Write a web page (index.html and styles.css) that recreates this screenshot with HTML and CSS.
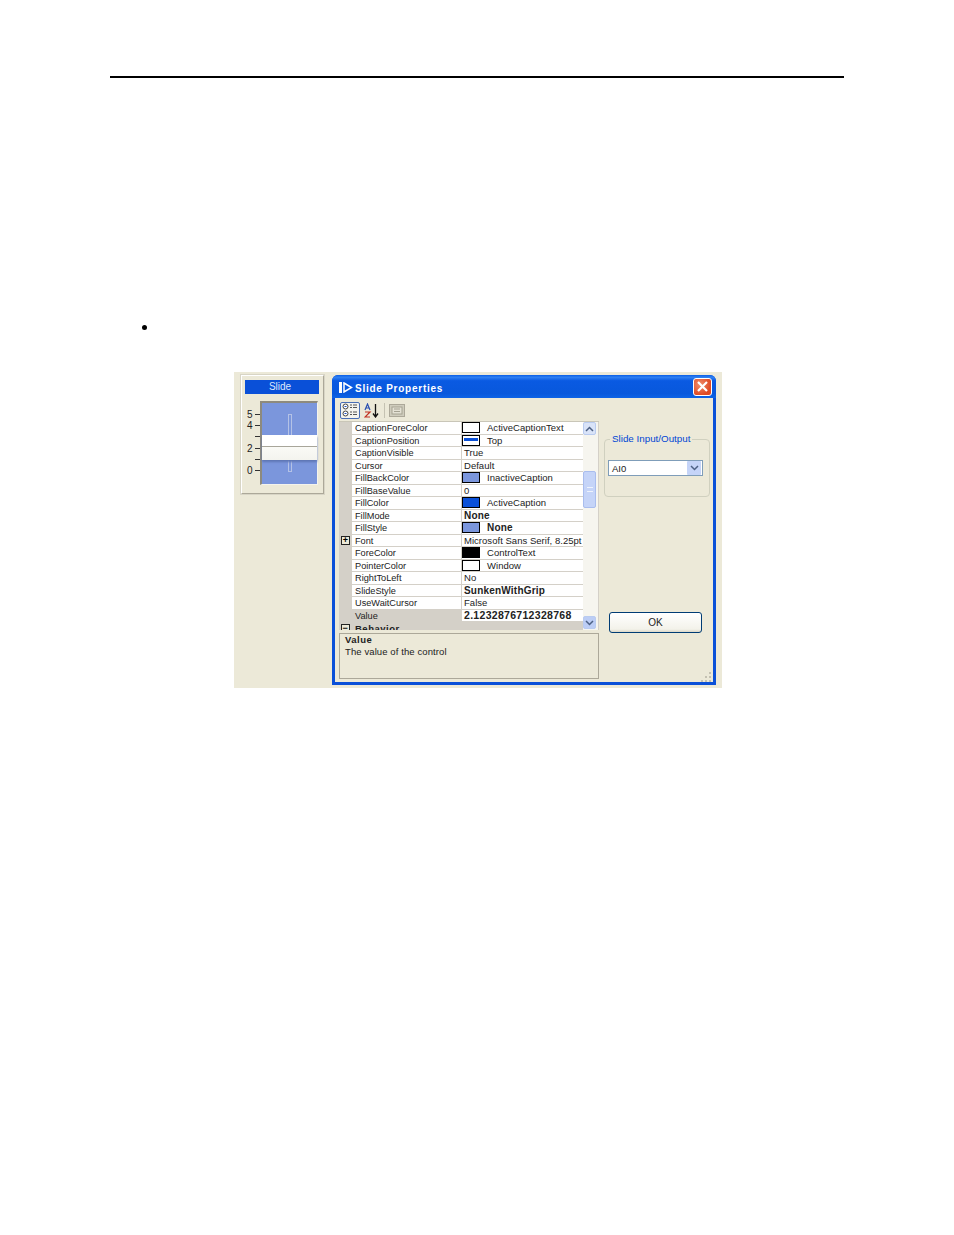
FILE: index.html
```html
<!DOCTYPE html>
<html lang="en">
<head>
    <meta charset="UTF-8">
    <title>Slide Properties</title>
    <link rel="stylesheet" href="styles.css">
</head>
<body>
    <div class="rule"></div>
    <div class="bullet"></div>

    <div class="figure">
        <div class="preview">
            <div class="preview-title">Slide</div>
            <div class="preview-body">
                <div class="scale">
                    <div class="tick"><span>5</span><i></i></div>
                    <div class="tick"><span>4</span><i></i></div>
                    <div class="tick"><span></span><i></i></div>
                    <div class="tick"><span>2</span><i></i></div>
                    <div class="tick"><span></span><i></i></div>
                    <div class="tick"><span>0</span><i></i></div>
                </div>
                <div class="slide">
                    <div class="track"></div>
                    <div class="thumb"></div>
                </div>
            </div>
        </div>

        <div class="dialog">
            <div class="titlebar">
                <svg class="title-icon" width="14" height="11" viewBox="0 0 14 11">
                    <path d="M0 0h3v11H0z" fill="#fff"/>
                    <path d="M5 1 L12.500 5.500 L5 10 Z" fill="none" stroke="#fff" stroke-width="1.500"/>
                </svg>
                <span class="title-text">Slide Properties</span>
                <div class="close">
                    <svg width="19" height="18" viewBox="0 0 19 18">
                        <path d="M5 4 L14 13 M14 4 L5 13" stroke="#fff" stroke-width="2.2"/>
                    </svg>
                </div>
            </div>

            <div class="dialog-body">
                <div class="left-col">
                    <div class="toolbar">
                        <div class="tool tool-on">
                            <svg width="18" height="15" viewBox="0 0 18 15">
                                <circle cx="4.500" cy="3.500" r="2.500" fill="#fff" stroke="#444"/>
                                <circle cx="4.500" cy="10.500" r="2.500" fill="#fff" stroke="#444"/>
                                <path d="M3.500 3.500h2M3.500 10.500h2" stroke="#1c4fc0"/>
                                <path d="M9 2h2M12 2h4M9 4.500h2M12 4.500h4M9 9h2M12 9h4M9 11.500h2M12 11.500h4" stroke="#555"/>
                            </svg>
                        </div>
                        <div class="tool">
                            <svg width="16" height="15" viewBox="0 0 16 15">
                                <path d="M1 7 L3.500 1 L6 7 M2 5h3" fill="none" stroke="#2a4fb0" stroke-width="1.200"/>
                                <path d="M1 9h5 L1 14h5" fill="none" stroke="#c03020" stroke-width="1.200"/>
                                <path d="M11.500 1v12 M9 10.500 L11.500 14 L14 10.500" fill="none" stroke="#111" stroke-width="1.300"/>
                            </svg>
                        </div>
                        <div class="tool-sep"></div>
                        <div class="tool">
                            <svg width="16" height="13" viewBox="0 0 16 13">
                                <rect x="0.500" y="0.500" width="15" height="12" fill="#cfccbd" stroke="#aca899"/>
                                <rect x="3" y="3" width="10" height="7" fill="#e4e1d4" stroke="#a5a292"/>
                                <path d="M5 5h6M5 7.500h6" stroke="#a5a292"/>
                            </svg>
                        </div>
                    </div>

                    <div class="grid">
                        <div class="rows">
                            <div class="row"><div class="gutter"></div><div class="name">CaptionForeColor</div><div class="val"><b class="swatch white"></b>ActiveCaptionText</div></div>
                            <div class="row"><div class="gutter"></div><div class="name">CaptionPosition</div><div class="val"><b class="swatch top"></b>Top</div></div>
                            <div class="row"><div class="gutter"></div><div class="name">CaptionVisible</div><div class="val">True</div></div>
                            <div class="row"><div class="gutter"></div><div class="name">Cursor</div><div class="val">Default</div></div>
                            <div class="row"><div class="gutter"></div><div class="name">FillBackColor</div><div class="val"><b class="swatch soft"></b>InactiveCaption</div></div>
                            <div class="row"><div class="gutter"></div><div class="name">FillBaseValue</div><div class="val">0</div></div>
                            <div class="row"><div class="gutter"></div><div class="name">FillColor</div><div class="val"><b class="swatch blue"></b>ActiveCaption</div></div>
                            <div class="row"><div class="gutter"></div><div class="name">FillMode</div><div class="val bold">None</div></div>
                            <div class="row"><div class="gutter"></div><div class="name">FillStyle</div><div class="val bold"><b class="swatch soft"></b>None</div></div>
                            <div class="row"><div class="gutter"><span class="box">+</span></div><div class="name">Font</div><div class="val">Microsoft Sans Serif, 8.25pt</div></div>
                            <div class="row"><div class="gutter"></div><div class="name">ForeColor</div><div class="val"><b class="swatch black"></b>ControlText</div></div>
                            <div class="row"><div class="gutter"></div><div class="name">PointerColor</div><div class="val"><b class="swatch white"></b>Window</div></div>
                            <div class="row"><div class="gutter"></div><div class="name">RightToLeft</div><div class="val">No</div></div>
                            <div class="row"><div class="gutter"></div><div class="name">SlideStyle</div><div class="val bold">SunkenWithGrip</div></div>
                            <div class="row"><div class="gutter"></div><div class="name">UseWaitCursor</div><div class="val">False</div></div>
                            <div class="row selected"><div class="gutter"></div><div class="name">Value</div><div class="val">2.1232876712328768</div></div>
                            <div class="row category"><div class="gutter"><span class="box">&minus;</span></div><div class="name">Behavior</div></div>
                        </div>
                        <div class="scrollbar">
                            <div class="arrow">
                                <svg width="9" height="6" viewBox="0 0 9 6"><path d="M1 5 L4.500 1.500 L8 5" fill="none" stroke="#4d6185" stroke-width="1.500"/></svg>
                            </div>
                            <div class="scroll-thumb"><span></span></div>
                            <div class="arrow arrow-down">
                                <svg width="9" height="6" viewBox="0 0 9 6"><path d="M1 1 L4.500 4.500 L8 1" fill="none" stroke="#4d6185" stroke-width="1.500"/></svg>
                            </div>
                        </div>
                    </div>

                    <div class="desc">
                        <div class="desc-title">Value</div>
                        <div>The value of the control</div>
                    </div>
                </div>

                <div class="right-col">
                    <fieldset class="group">
                        <legend>Slide Input/Output</legend>
                        <div class="combo">
                            <span>AI0</span>
                            <div class="combo-btn">
                                <svg width="9" height="6" viewBox="0 0 9 6"><path d="M1 1 L4.500 4.500 L8 1" fill="none" stroke="#4d6185" stroke-width="1.500"/></svg>
                            </div>
                        </div>
                    </fieldset>
                    <div class="ok">OK</div>
                </div>

                <svg class="grip" width="11" height="11" viewBox="0 0 11 11">
                    <path d="M8 1h2v2H8zM4 5h2v2H4zM8 5h2v2H8zM0 9h2v2H0zM4 9h2v2H4zM8 9h2v2H8z" fill="#c4c1b2"/>
                </svg>
            </div>
        </div>
    </div>
</body>
</html>
```

FILE: styles.css
```css
* {
    box-sizing: border-box;
}

body {
    margin: 0;
    background: #fff;
    font-family: "Liberation Sans", Arial, sans-serif;
    font-size: 9.5px;
    color: #222;
}

.rule {
    width: 734px;
    height: 2px;
    margin: 76px 0 0 110px;
    background: #000;
}

.bullet {
    width: 5px;
    height: 5px;
    margin: 247px 0 0 142px;
    border-radius: 50%;
    background: #000;
}

.figure {
    display: flex;
    align-items: flex-start;
    width: 488px;
    height: 316px;
    margin: 42px 0 0 234px;
    padding: 3px 0 0 7px;
    background: #ece9d8;
}

/* left preview of the control */
.preview {
    width: 83px;
    height: 119px;
    padding: 4px 4px 0 3px;
    background: #ece9d8;
    border: 1px solid #fff;
    border-right-color: #aca899;
    border-bottom-color: #aca899;
    box-shadow: 0 0 0 1px #d8d5c6;
}

.preview-title {
    height: 14px;
    padding-right: 4px;
    background: #0a50d8;
    color: #dfe8fb;
    font-size: 10px;
    line-height: 13px;
    text-align: center;
}

.preview-body {
    display: flex;
    margin-top: 7px;
}

.scale {
    display: grid;
    grid-auto-rows: 11.2px;
    width: 15px;
    height: 84px;
    padding-top: 8px;
}

.tick {
    display: flex;
    align-items: center;
    justify-content: space-between;
    height: 11.2px;
    font-size: 10px;
    line-height: 11px;
}

.tick span {
    padding-left: 2px;
}

.tick i {
    width: 5px;
    height: 1px;
    background: #333;
}

.slide {
    position: relative;
    width: 58px;
    height: 84px;
    background: #7b96dc;
    border: 2px solid #8d8a7d;
    border-right: 1px solid #f4f3ec;
    border-bottom: 1px solid #f4f3ec;
}

.track {
    position: absolute;
    left: 26px;
    top: 11px;
    width: 4px;
    height: 58px;
    border: 1px solid #b4c2e6;
}

.thumb {
    position: absolute;
    left: 0;
    top: 32px;
    width: 55px;
    height: 25px;
    background: linear-gradient(#fff 0, #fff 44%, #a8a69a 44%, #a8a69a 48%, #fafaf6 48%, #f4f4ee 100%);
    box-shadow: 0 2px 2px #5f76b4;
}

/* properties dialog */
.dialog {
    display: flex;
    flex-direction: column;
    width: 384px;
    height: 310px;
    margin-left: 8px;
    border-radius: 6px 6px 0 0;
    background: #0a50d8;
}

.titlebar {
    display: flex;
    align-items: center;
    flex: none;
    height: 23px;
    padding: 0 4px 0 7px;
    border-radius: 6px 6px 0 0;
    background: linear-gradient(#0a5fe6 0, #2f80f2 10%, #0a5ae2 25%, #0858dc 80%, #0d63e6 100%);
}

.title-icon {
    margin-top: 2px;
}

.title-text {
    margin: 3px 0 0 2px;
    color: #fff;
    font-size: 10px;
    font-weight: bold;
    letter-spacing: 0.75px;
}

.close {
    width: 19px;
    height: 18px;
    margin-left: auto;
    border: 1px solid #fff;
    border-radius: 3px;
    background: radial-gradient(circle at 35% 35%, #ef8d6c, #df4a24 70%);
    overflow: hidden;
}

.close svg {
    display: block;
    margin: -1px;
}

.dialog-body {
    position: relative;
    display: flex;
    flex: 1;
    margin: 0 3px 3px;
    padding-left: 4px;
    background: #ece9d8;
}

.toolbar {
    display: flex;
    align-items: center;
    height: 23px;
    padding: 2px 0 0 1px;
}

.tool {
    display: flex;
    align-items: center;
    justify-content: center;
    width: 20px;
    height: 17px;
    margin-right: 2px;
}

.tool-on {
    background: #f4f4ee;
    border: 1px solid #4a6fb5;
    border-radius: 2px;
}

.tool-sep {
    width: 1px;
    height: 15px;
    margin: 0 2px 0 0;
    background: #c5c2b2;
}

.grid {
    display: flex;
    width: 260px;
    height: 209px;
    overflow: hidden;
    background: #fff;
    border-top: 1px solid #c9c6b8;
}

.rows {
    width: 244px;
    flex: none;
}

.row {
    display: flex;
    height: 12.5px;
    line-height: 13px;
    background: #fff;
}

.gutter {
    display: flex;
    align-items: center;
    justify-content: center;
    flex: none;
    width: 13px;
    background: #d4d0c8;
}

.box {
    width: 9px;
    height: 9px;
    border: 1px solid #222;
    background: #ece9d8;
    color: #000;
    font-size: 9px;
    font-weight: bold;
    line-height: 6px;
    text-align: center;
}

.name {
    flex: none;
    width: 110px;
    padding-left: 3px;
    border-bottom: 1px solid #d4d0c8;
    border-right: 1px solid #d4d0c8;
    font-size: 9.2px;
    white-space: nowrap;
}

.val {
    display: flex;
    align-items: center;
    flex: 1;
    padding-left: 2px;
    border-bottom: 1px solid #d4d0c8;
    letter-spacing: 0.03px;
    white-space: nowrap;
}

.val.bold {
    font-size: 10px;
    font-weight: bold;
    letter-spacing: 0.2px;
}

.selected .name {
    background: #d4d0c8;
}

.selected .val {
    font-size: 10.5px;
    font-weight: bold;
    letter-spacing: 0.3px;
}

.category,
.category .name {
    background: #d4d0c8;
    border-color: #d4d0c8;
    font-size: 9.5px;
    font-weight: bold;
    letter-spacing: 0.5px;
}

.swatch {
    flex: none;
    width: 18px;
    height: 11px;
    margin: 0 7px 0 -2px;
    border: 1px solid #000;
}

.white { background: #fff; }
.soft { background: #7b96dc; }
.blue { background: #0a50d8; }
.black { background: #000; }

.top {
    background: #fff linear-gradient(#0a50d8, #0a50d8) no-repeat 1px 2px / 14px 3px;
}

.scrollbar {
    display: flex;
    flex-direction: column;
    width: 16px;
    padding-right: 2px;
    background: #f6f5ef;
    border-right: 1px solid #d4d0c8;
}

.arrow {
    display: flex;
    align-items: center;
    justify-content: center;
    flex: none;
    height: 13px;
    background: #d9e3f8;
    border: 1px solid #b9cbf0;
    border-radius: 2px;
}

.arrow-down {
    margin-top: auto;
    margin-bottom: 1px;
    background: #bccdf5;
}

.scroll-thumb {
    display: flex;
    align-items: center;
    justify-content: center;
    height: 37px;
    margin-top: 36px;
    background: #c5d4f8;
    border: 1px solid #a9bdee;
    border-radius: 2px;
}

.scroll-thumb span {
    width: 6px;
    height: 5px;
    border-top: 1px solid #eef3fd;
    border-bottom: 1px solid #eef3fd;
}

.desc {
    width: 260px;
    height: 46px;
    margin-top: 3px;
    padding: 0 5px;
    border: 1px solid #aca899;
    line-height: 12px;
    letter-spacing: 0.1px;
}

.desc-title {
    font-weight: bold;
    letter-spacing: 0.5px;
}

.right-col {
    display: flex;
    flex-direction: column;
    width: 106px;
    margin-left: 5px;
}

.group {
    width: 106px;
    height: 65px;
    margin: 34px 0 0;
    padding: 14px 0 0 3px;
    border: 1px solid #d0d0bf;
    border-radius: 4px;
}

.group legend {
    margin-left: 2px;
    padding: 1px 2px 1px;
    color: #0046d5;
    font-size: 9.8px;
    line-height: 12px;
}

.combo {
    display: flex;
    align-items: center;
    justify-content: space-between;
    width: 95px;
    height: 16px;
    padding: 1px 1px 1px 3px;
    background: #fff;
    border: 1px solid #7f9db9;
}

.combo-btn {
    display: flex;
    align-items: center;
    justify-content: center;
    width: 14px;
    height: 14px;
    background: #c5d4f8;
    border-radius: 1px;
}

.ok {
    width: 93px;
    height: 21px;
    margin: 115px 0 0 5px;
    background: linear-gradient(#fff, #f3f2ea 85%, #dcd8c8);
    border: 1px solid #003c74;
    border-radius: 3px;
    font-size: 10px;
    line-height: 19px;
    text-align: center;
}

.grip {
    position: absolute;
    right: 1px;
    bottom: 0;
}
```
